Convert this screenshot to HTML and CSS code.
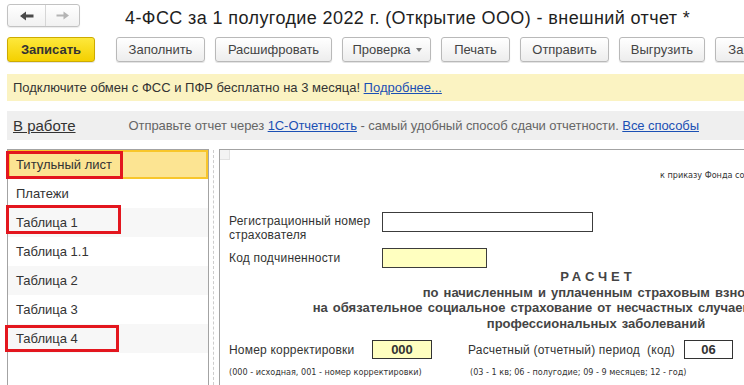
FILE: index.html
```html
<!DOCTYPE html>
<html lang="ru">
<head>
<meta charset="utf-8">
<title>4-ФСС</title>
<link rel="stylesheet" href="styles.css">
</head>
<body>
<div class="top">
  <div class="nav">
    <span class="nav-btn back">
      <svg width="14" height="10" viewBox="0 0 14 10"><path d="M0 5 L6 0.5 V3.5 H13.5 V6.5 H6 V9.5 Z" fill="#4a4a4a"/></svg>
    </span>
    <span class="nav-btn fwd">
      <svg width="13" height="9" viewBox="0 0 13 9"><path d="M13 4.5 L7.5 0.5 V3.5 H0.5 V5.5 H7.5 V8.5 Z" fill="#b4b4b4"/></svg>
    </span>
  </div>
  <h1 class="title">4-ФСС за 1 полугодие 2022 г. (Открытие ООО) - внешний отчет *</h1>
</div>

<div class="toolbar">
  <button class="btn btn-primary">Записать</button>
  <button class="btn btn-fill">Заполнить</button>
  <button class="btn btn-decode">Расшифровать</button>
  <button class="btn btn-check">Проверка<span class="caret"></span></button>
  <button class="btn btn-print">Печать</button>
  <button class="btn btn-send">Отправить</button>
  <button class="btn btn-export">Выгрузить</button>
  <button class="btn btn-import">Загрузить</button>
</div>

<div class="banner">Подключите обмен с ФСС и ПФР бесплатно на 3 месяца! <a class="link" href="#">Подробнее...</a></div>

<div class="status">
  <span class="state">В работе</span>
  <span class="hint">Отправьте отчет через <a class="link" href="#">1С-Отчетность</a> - самый удобный способ сдачи отчетности. <a class="link" href="#">Все способы</a></span>
</div>

<div class="main">
  <ul class="pages">
    <li class="page selected">Титульный лист</li>
    <li class="page">Платежи</li>
    <li class="page alt">Таблица 1</li>
    <li class="page">Таблица 1.1</li>
    <li class="page alt">Таблица 2</li>
    <li class="page">Таблица 3</li>
    <li class="page alt">Таблица 4</li>
    <li class="mark mark-1"></li>
    <li class="mark mark-2"></li>
    <li class="mark mark-3"></li>
  </ul>
  <div class="splitter"></div>
  <div class="sheet">
    <div class="corner"></div>
    <div class="order">к приказу Фонда социального страхования Российской Федерации</div>
    <div class="form">
      <div class="row reg">
        <div class="label">Регистрационный номер<br>страхователя</div>
        <div class="field wide"></div>
      </div>
      <div class="row sub">
        <div class="label">Код подчиненности</div>
        <div class="field code"></div>
      </div>
      <div class="heading">
        <div class="heading-title">РАСЧЕТ</div>
        <div>по начисленным и уплаченным страховым взносам</div>
        <div>на обязательное социальное страхование от несчастных случаев на производстве и</div>
        <div>профессиональных заболеваний</div>
      </div>
      <div class="row corr">
        <div class="label label-corr">Номер корректировки</div>
        <div class="box">000</div>
        <div class="label label-period">Расчетный (отчетный) период&nbsp; (код)</div>
        <div class="box period">06</div>
      </div>
      <div class="row notes">
        <div class="note note-first">(000 - исходная, 001 - номер корректировки)</div>
        <div class="note">(03 - 1 кв; 06 - полугодие; 09 - 9 месяцев; 12 - год)</div>
      </div>
    </div>
  </div>
</div>
</body>
</html>
```

FILE: styles.css
```css
html, body {
  margin: 0;
  padding: 0;
}

body {
  width: 744px;
  height: 385px;
  overflow: hidden;
  background: #fff;
  color: #333;
  font-family: "Liberation Sans", Arial, sans-serif;
}

/* ---------- top bar ---------- */
.top {
  display: flex;
  height: 37px;
  padding-left: 7px;
  box-sizing: border-box;
}

.nav {
  display: flex;
  margin-top: 4px;
  width: 73px;
  height: 23px;
  box-sizing: border-box;
  border: 1px solid #c2c2c2;
  border-radius: 3px;
  background: linear-gradient(#ffffff, #f1f1f1);
  box-shadow: 0 1px 1px rgba(0, 0, 0, 0.08);
}

.nav-btn {
  display: flex;
  align-items: center;
  justify-content: center;
}

.back {
  width: 37px;
}

.fwd {
  width: 33px;
  border-left: 1px solid #d6d6d6;
}

.title {
  margin: 0 0 0 45px;
  padding-top: 8px;
  font-size: 18px;
  font-weight: normal;
  line-height: 20px;
  letter-spacing: 0.4px;
  color: #1e1e1e;
  white-space: nowrap;
}

/* ---------- toolbar ---------- */
.toolbar {
  display: flex;
  gap: 10px;
  padding-left: 7px;
  height: 26px;
  overflow: hidden;
  white-space: nowrap;
}

.btn {
  flex: none;
  display: flex;
  align-items: center;
  justify-content: center;
  height: 25px;
  box-sizing: border-box;
  margin: 0;
  padding: 0;
  border: 1px solid #b9b9b9;
  border-radius: 3px;
  background: linear-gradient(#ffffff, #ededed);
  box-shadow: 0 1px 1px rgba(0, 0, 0, 0.12);
  font-family: "Liberation Sans", Arial, sans-serif;
  font-size: 13px;
  line-height: 23px;
  color: #444;
}

.btn-primary {
  width: 88px;
  margin-right: 11px;
  background: linear-gradient(#fde83c, #f4d000);
  border-color: #cdab00;
  font-weight: bold;
  color: #333;
}

.btn-fill { width: 89px; }
.btn-decode { width: 117px; }
.btn-check { width: 89px; padding-left: 1px; }
.btn-print { width: 69px; }
.btn-send { width: 89px; }
.btn-export { width: 86px; }
.btn-import { width: 86px; }

.caret {
  display: inline-block;
  margin-left: 5px;
  border-left: 3.5px solid transparent;
  border-right: 3.5px solid transparent;
  border-top: 4px solid #777;
}

/* ---------- banner / status ---------- */
.banner {
  margin: 11px 0 0 7px;
  height: 27px;
  padding-left: 6px;
  background: #fbf3c2;
  font-size: 13px;
  line-height: 27px;
  color: #333;
  white-space: nowrap;
}

.link {
  color: #1b50b4;
  text-decoration: underline;
}

.status {
  display: flex;
  align-items: center;
  margin: 10px 0 0 7px;
  height: 29px;
  padding-left: 6px;
  background: #efefef;
  white-space: nowrap;
}

.state {
  font-size: 15px;
  color: #333;
  text-decoration: underline;
}

.hint {
  margin-left: 53px;
  font-size: 13px;
  letter-spacing: -0.07px;
  color: #666;
}

/* ---------- main ---------- */
.main {
  display: flex;
  margin-top: 9px;
  padding-left: 7px;
  height: 236px;
}

.pages {
  position: relative;
  flex: none;
  width: 202px;
  box-sizing: border-box;
  margin: 0;
  padding: 0;
  list-style: none;
  border: 1px solid #a3a3a3;
  border-bottom: none;
}

.page {
  height: 29px;
  padding-left: 8px;
  font-size: 13px;
  line-height: 29px;
  color: #333;
}

.page.alt {
  background: #f7f7f7;
}

.page.selected {
  background: #fce492;
  box-shadow: inset 0 0 0 2px #f8c62b;
}

.mark {
  position: absolute;
  box-sizing: border-box;
  border: 3px solid #e3161e;
}

.mark-1 {
  left: -2px;
  top: 1px;
  width: 117px;
  height: 28px;
}

.mark-2 {
  left: -2px;
  top: 55px;
  width: 115px;
  height: 29px;
}

.mark-3 {
  left: -3px;
  top: 175px;
  width: 114px;
  height: 27px;
}

.splitter {
  flex: none;
  width: 0;
  margin: 1px 5px 0 4px;
  border-left: 1px dashed #cdcdcd;
}

.sheet {
  flex: 1;
  min-width: 0;
  overflow: hidden;
  border-left: 1px solid #a3a3a3;
  border-top: 1px solid #a3a3a3;
}

.corner {
  width: 9px;
  height: 9px;
  background: #f3f3f3;
  border-right: 1px solid #e2e2e2;
  border-bottom: 1px solid #e2e2e2;
}

.order {
  margin: 10px 0 0 440px;
  font-family: "DejaVu Sans Condensed", "DejaVu Sans", sans-serif;
  font-size: 9px;
  line-height: 11px;
  color: #333;
  white-space: nowrap;
}

.form {
  padding-left: 9px;
}

.row {
  display: flex;
}

.label {
  flex: none;
  width: 153px;
  font-size: 12px;
  line-height: 14px;
  letter-spacing: 0.2px;
  color: #333;
  white-space: nowrap;
}

.reg {
  margin-top: 31px;
}

.reg .label {
  padding-top: 2px;
}

.sub {
  margin-top: 6px;
  align-items: center;
}

.field {
  flex: none;
  height: 20px;
  box-sizing: border-box;
  border: 1px solid #3c3c3c;
  background: #fff;
}

.field.wide {
  width: 211px;
}

.field.code {
  width: 105px;
  background: #ffffc0;
}

.heading {
  margin-top: 1px;
  width: 734px;
  text-align: center;
  font-size: 13px;
  font-weight: bold;
  line-height: 15.6px;
  word-spacing: 1.5px;
  color: #444;
  white-space: nowrap;
}

.heading-title {
  letter-spacing: 4px;
  padding-left: 4px;
}

.corr {
  margin-top: 9px;
  align-items: center;
}

.label-corr {
  width: 143px;
}

.label-period {
  width: 216px;
  margin-left: 36px;
}

.box {
  flex: none;
  width: 60px;
  height: 19px;
  box-sizing: border-box;
  border: 1px solid #333;
  background: #ffffc0;
  font-size: 13px;
  font-weight: bold;
  line-height: 17px;
  text-align: center;
  color: #333;
}

.box.period {
  width: 49px;
  background: #fff;
}

.notes {
  margin-top: 7px;
}

.note {
  flex: none;
  font-family: "DejaVu Sans Condensed", "DejaVu Sans", sans-serif;
  font-size: 9px;
  line-height: 12px;
  color: #333;
  white-space: nowrap;
}

.note-first {
  width: 241px;
}
```
